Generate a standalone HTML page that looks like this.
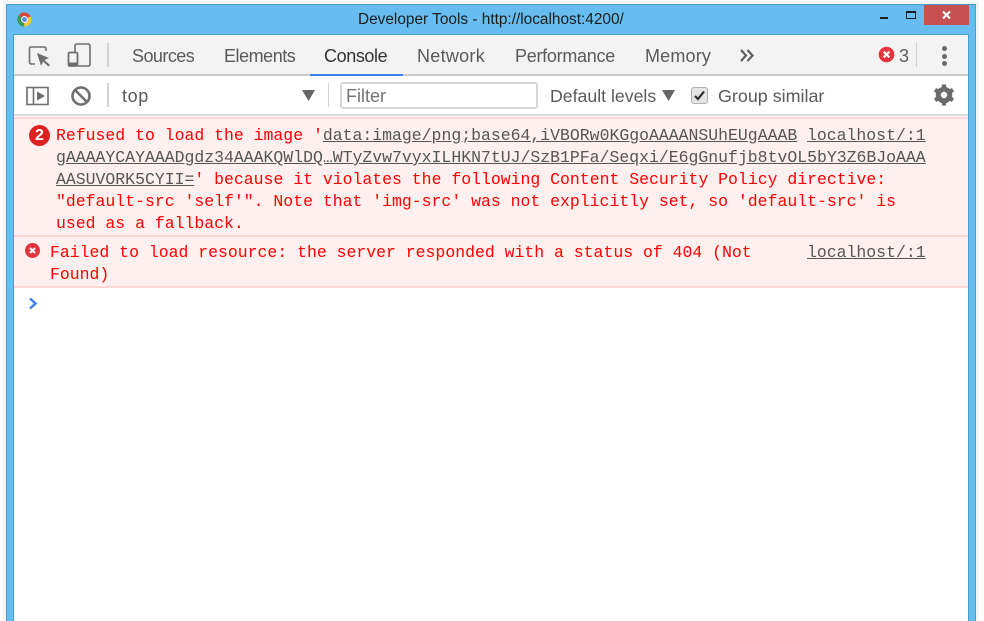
<!DOCTYPE html>
<html><head><meta charset="utf-8">
<style>
html,body{margin:0;padding:0;background:#fff;width:984px;height:621px;overflow:hidden}
div,span,svg{position:absolute;box-sizing:border-box}
a,u{position:static}
.t{font-family:"Liberation Sans",sans-serif;font-size:18px;color:#5a5a5a;white-space:nowrap;line-height:22px}
.m{font-family:"Liberation Mono",monospace;font-size:16.48px;color:#ff0000;white-space:pre;line-height:22px;height:22px}
.m span{position:static;color:#555;text-decoration:underline}
.l{color:#555;text-decoration:underline}
</style></head><body>
<div style="left:3px;top:1px;width:976px;height:620px;background:#f4f4f4"></div>
<div style="left:6px;top:4px;width:970px;height:617px;background:#67bdf0;border:1px solid #4a9fcf;border-bottom:0"></div>
<svg style="left:17px;top:12px" width="15" height="15" viewBox="0 0 17 17">
<path d="M8.5 8.5 L2 3.5 A8 8 0 0 1 15.5 5 Z" fill="#d9473c"/>
<path d="M8.5 8.5 L15.5 5 A8 8 0 0 1 8 16.5 Z" fill="#f3c63a"/>
<path d="M8.5 8.5 L8 16.5 A8 8 0 0 1 2 3.5 Z" fill="#3a9a54"/>
<circle cx="8.5" cy="8.5" r="3.9" fill="#fff"/><circle cx="8.5" cy="8.5" r="2.9" fill="#5b8fe0"/>
</svg>
<div class="t" style="left:358px;top:9px;font-size:15.4px;color:#1c1c1c">Developer Tools - http://localhost:4200/</div>
<div style="left:880px;top:17px;width:8px;height:2px;background:#1e1e1e"></div>
<div style="left:906px;top:11px;width:10px;height:8px;border:1px solid #1e1e1e;border-top:2px solid #1e1e1e"></div>
<div style="left:924px;top:5px;width:45px;height:20px;background:#c75050"></div>
<svg style="left:941px;top:10px" width="11" height="10" viewBox="0 0 11 10"><path d="M2 1.5L9 8.5M9 1.5L2 8.5" stroke="#fff" stroke-width="2"/></svg>

<div style="left:13px;top:34px;width:956px;height:587px;background:#fff;border:1px solid #4a9fcf;border-bottom:0"></div>
<div style="left:14px;top:35px;width:954px;height:39px;background:#f3f3f3"></div>
<div style="left:14px;top:74px;width:954px;height:2px;background:#cbcbcb"></div>
<div style="left:310px;top:74px;width:93px;height:2px;background:#3b7ff0"></div>
<div style="left:14px;top:114px;width:954px;height:2px;background:#dcdcdc"></div>

<svg style="left:28px;top:44px" width="24" height="24" viewBox="0 0 24 24" fill="none">
<path d="M7 20H3.5Q1.5 20 1.5 18V4Q1.5 3 3.5 3H16Q18 3 18 5V7" stroke="#6e6e6e" stroke-width="1.6"/>
<path d="M9 9L21 14L16.5 16L22 21L20.5 22.500L15 17.500L13 22Z" fill="#6e6e6e"/></svg>
<svg style="left:67px;top:43px" width="24" height="25" viewBox="0 0 24 25" fill="none">
<path d="M8 9V3Q8 1 10 1H21Q23 1 23 3V21Q23 23 21 23H11" stroke="#6e6e6e" stroke-width="1.6"/>
<rect x="1.500" y="9.500" width="9" height="13.500" rx="1.500" stroke="#6e6e6e" stroke-width="1.800"/>
<rect x="1" y="19.500" width="10" height="4" fill="#6e6e6e"/></svg>
<div style="left:107px;top:43px;width:2px;height:24px;background:#d2d2d2"></div>

<div class="t" style="left:132px;top:45px;letter-spacing:-.55px">Sources</div>
<div class="t" style="left:224px;top:45px;letter-spacing:-.46px">Elements</div>
<div class="t" style="left:324px;top:45px;letter-spacing:-.4px;color:#333">Console</div>
<div class="t" style="left:417px;top:45px;letter-spacing:.28px">Network</div>
<div class="t" style="left:515px;top:45px;letter-spacing:-.28px">Performance</div>
<div class="t" style="left:645px;top:45px;letter-spacing:.17px">Memory</div>
<svg style="left:739px;top:48px" width="16" height="15" viewBox="0 0 16 15" fill="none"><path d="M2 2L7 7.500L2 13M8.500 2L13.500 7.500L8.500 13" stroke="#5f5f5f" stroke-width="2.200"/></svg>
<svg style="left:878px;top:46px" width="17" height="17" viewBox="0 0 17 17"><circle cx="8.500" cy="8.500" r="7.800" fill="#e8323c"/><path d="M5.700 5.700L11.300 11.300M11.300 5.700L5.700 11.300" stroke="#fff" stroke-width="2.200"/></svg>
<div class="t" style="left:899px;top:45px;font-size:18px">3</div>
<div style="left:916px;top:43px;width:1px;height:24px;background:#cfcfcf"></div>
<div style="left:942px;top:46px;width:5px;height:5px;border-radius:50%;background:#6a6a6a"></div>
<div style="left:942px;top:54px;width:5px;height:5px;border-radius:50%;background:#6a6a6a"></div>
<div style="left:942px;top:61px;width:5px;height:5px;border-radius:50%;background:#6a6a6a"></div>

<svg style="left:26px;top:86px" width="23" height="20" viewBox="0 0 23 20" fill="none">
<rect x="1" y="1.500" width="21" height="17" stroke="#6e6e6e" stroke-width="1.600"/><path d="M7.500 1.500V18.500" stroke="#6e6e6e" stroke-width="1.600"/><path d="M11 5.500L19 10L11 14.500Z" fill="#6e6e6e"/></svg>
<svg style="left:70px;top:85px" width="22" height="22" viewBox="0 0 22 22" fill="none"><circle cx="11" cy="11" r="8.500" stroke="#6e6e6e" stroke-width="2.600"/><path d="M5 5L17 17" stroke="#6e6e6e" stroke-width="2.600"/></svg>
<div style="left:107px;top:83px;width:2px;height:24px;background:#d2d2d2"></div>
<div class="t" style="left:122px;top:85px;letter-spacing:.6px">top</div>
<svg style="left:302px;top:90px" width="13" height="11" viewBox="0 0 13 11"><path d="M0 0H13L6.500 11Z" fill="#666"/></svg>
<div style="left:328px;top:83px;width:1px;height:24px;background:#d2d2d2"></div>
<div style="left:340px;top:82px;width:198px;height:27px;background:#fff;border:2px solid #d6d6d6;border-radius:3px"></div>
<div class="t" style="left:346px;top:85px;font-size:18px;color:#757575">Filter</div>
<div class="t" style="left:550px;top:85px;font-size:17.700px">Default levels</div>
<svg style="left:662px;top:90px" width="13" height="11" viewBox="0 0 13 11"><path d="M0 0H13L6.500 11Z" fill="#666"/></svg>
<div style="left:691px;top:87px;width:17px;height:17px;background:#e4e4e4;border:1px solid #b0b0b0;border-radius:3px"></div>
<svg style="left:692px;top:88px" width="15" height="15" viewBox="0 0 15 15" fill="none"><path d="M3 8L6 11L12 3.500" stroke="#2a2a2a" stroke-width="2.200"/></svg>
<div class="t" style="left:718px;top:85px;font-size:17.900px">Group similar</div>
<svg style="left:933px;top:84px" width="22" height="22" viewBox="0 0 22 22"><circle cx="11" cy="11" r="6" fill="none" stroke="#6a6a6a" stroke-width="4.500"/><path d="M11 11L11 0.500M11 11L20 5.800M11 11L20 16.200M11 11L11 21.500M11 11L2 16.200M11 11L2 5.800" stroke="#6a6a6a" stroke-width="4.200"/><circle cx="11" cy="11" r="3.200" fill="#fff"/></svg>

<div style="left:14px;top:117px;width:954px;height:119px;background:#fff0f0;border-top:2px solid #ffd6d6"></div>
<div style="left:14px;top:235px;width:954px;height:53px;background:#fff0f0;border-top:2px solid #ffd6d6;border-bottom:2px solid #ffd6d6"></div>

<div style="left:29px;top:125px;width:21px;height:21px;border-radius:50%;background:#dd2020;color:#fff;font:bold 16px/21px 'Liberation Sans',sans-serif;text-align:center">2</div>
<div class="m" style="left:56px;top:125px">Refused to load the image '<span>data:image/png;base64,iVBORw0KGgoAAAANSUhEUgAAAB</span></div>
<div class="m l" style="left:807px;top:125px">localhost/:1</div>
<div class="m" style="left:56px;top:147px"><span>gAAAAYCAYAAADgdz34AAAKQWlDQ…WTyZvw7vyxILHKN7tUJ/SzB1PFa/Seqxi/E6gGnufjb8tvOL5bY3Z6BJoAAA</span></div>
<div class="m" style="left:56px;top:169px"><span>AASUVORK5CYII=</span>' because it violates the following Content Security Policy directive:</div>
<div class="m" style="left:56px;top:191px">"default-src 'self'". Note that 'img-src' was not explicitly set, so 'default-src' is</div>
<div class="m" style="left:56px;top:213px">used as a fallback.</div>

<svg style="left:25px;top:243px" width="15" height="15" viewBox="0 0 15 15"><circle cx="7.500" cy="7.500" r="7.500" fill="#e0343e"/><path d="M5 5L10 10M10 5L5 10" stroke="#fff" stroke-width="2"/></svg>
<div class="m" style="left:50px;top:242px">Failed to load resource: the server responded with a status of 404 (Not</div>
<div class="m l" style="left:807px;top:242px">localhost/:1</div>
<div class="m" style="left:50px;top:264px">Found)</div>

<svg style="left:28px;top:297px" width="10" height="13" viewBox="0 0 10 13" fill="none"><path d="M2 1.500L7.500 6.500L2 11.500" stroke="#3b7ff0" stroke-width="2.400"/></svg>
</body></html>
